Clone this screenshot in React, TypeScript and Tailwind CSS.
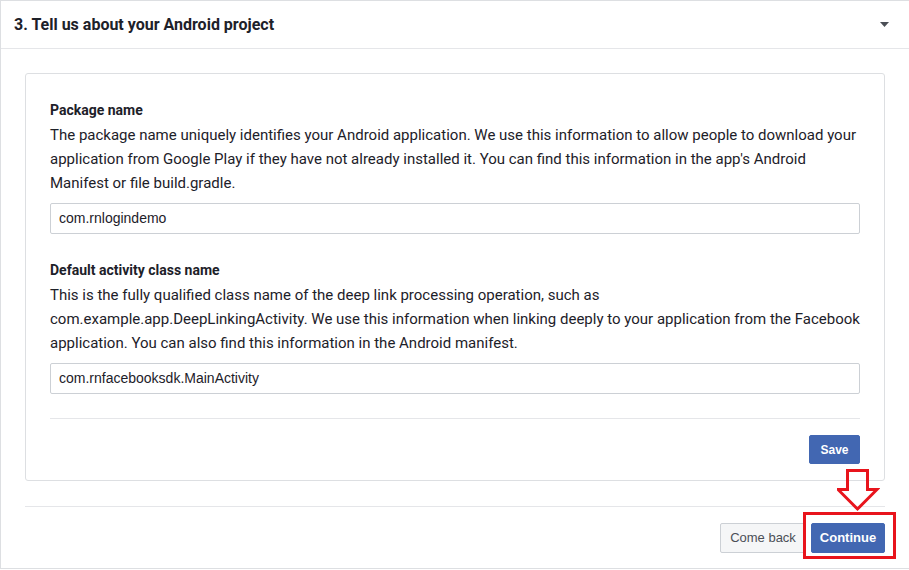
import React from 'react';

const Field: React.FC<{ label: string; help: string; value: string; top: string }> = ({ label, help, value, top }) => (
  <div className={top}>
    <div className="text-[14px] leading-[18px] font-bold text-[#1d2129] mb-[4px]">{label}</div>
    <p className="text-[15px] leading-[24px] text-[#1d2129]">{help}</p>
    <div className="mt-[8px] h-[31px] border border-[#ccd0d5] rounded-[2px] flex items-center px-[8px] text-[14px] text-[#1d2129] font-['Liberation_Sans',Arial,sans-serif]">
      {value}
    </div>
  </div>
);

export default function App() {
  return (
    <div className="w-[909px] h-[570px] bg-white font-['Roboto',sans-serif]">
      <div className="relative w-[909px] h-[569px] border-l border-t border-b border-[#dddfe2] flex flex-col">
        {/* Header */}
        <div className="h-[48px] border-b border-[#e5e6e9] flex items-center justify-between pl-[13px] pr-[20px]">
          <h2 className="text-[16px] font-bold text-[#1d2129]">3. Tell us about your Android project</h2>
          <svg width="9" height="5" viewBox="0 0 9 5">
            <path d="M0 0 H9 L4.5 5 Z" fill="#4b4f56" />
          </svg>
        </div>

        <div className="px-[24px] pt-[24px]">
          {/* Card */}
          <div className="border border-[#dddfe2] rounded-[3px] px-[24px] pt-[27px] pb-[16px]">
            <Field
              top=""
              label="Package name"
              help="The package name uniquely identifies your Android application. We use this information to allow people to download your application from Google Play if they have not already installed it. You can find this information in the app's Android Manifest or file build.gradle."
              value="com.rnlogindemo"
            />
            <Field
              top="mt-[27px]"
              label="Default activity class name"
              help="This is the fully qualified class name of the deep link processing operation, such as com.example.app.DeepLinkingActivity. We use this information when linking deeply to your application from the Facebook application. You can also find this information in the Android manifest."
              value="com.rnfacebooksdk.MainActivity"
            />
            <div className="mt-[24px] border-t border-[#e5e6e9]" />
            <div className="mt-[16px] flex justify-end">
              <button className="h-[29px] w-[51px] bg-[#4267b2] border border-[#4267b2] rounded-[2px] text-white text-[12px] font-bold font-['Liberation_Sans',Arial,sans-serif]">
                Save
              </button>
            </div>
          </div>

          <div className="mt-[25px] border-t border-[#e5e6e9]" />
          <div className="mt-[16px] flex justify-end gap-[5px]">
            <button className="h-[30px] w-[86px] bg-[#f5f6f7] border border-[#ccd0d5] rounded-[2px] text-[#4b4f56] text-[13px] font-['Liberation_Sans',Arial,sans-serif]">
              Come back
            </button>
            <button className="h-[30px] w-[74px] bg-[#4267b2] border border-[#4267b2] rounded-[2px] text-white text-[13px] font-bold font-['Liberation_Sans',Arial,sans-serif]">
              Continue
            </button>
          </div>
        </div>

        {/* Annotation: red arrow and highlight box */}
        <svg className="absolute left-[836px] top-[467px]" width="43" height="44" viewBox="0 0 43 44">
          <path d="M10.5 2.5 H30.5 V21.5 H40 L20.5 41 L1 21.5 H10.5 Z" fill="none" stroke="#e8141c" strokeWidth="3" />
        </svg>
        <div className="absolute left-[802px] top-[511px] w-[93px] h-[47px] border-[3px] border-[#e8141c]" />
      </div>
    </div>
  );
}
